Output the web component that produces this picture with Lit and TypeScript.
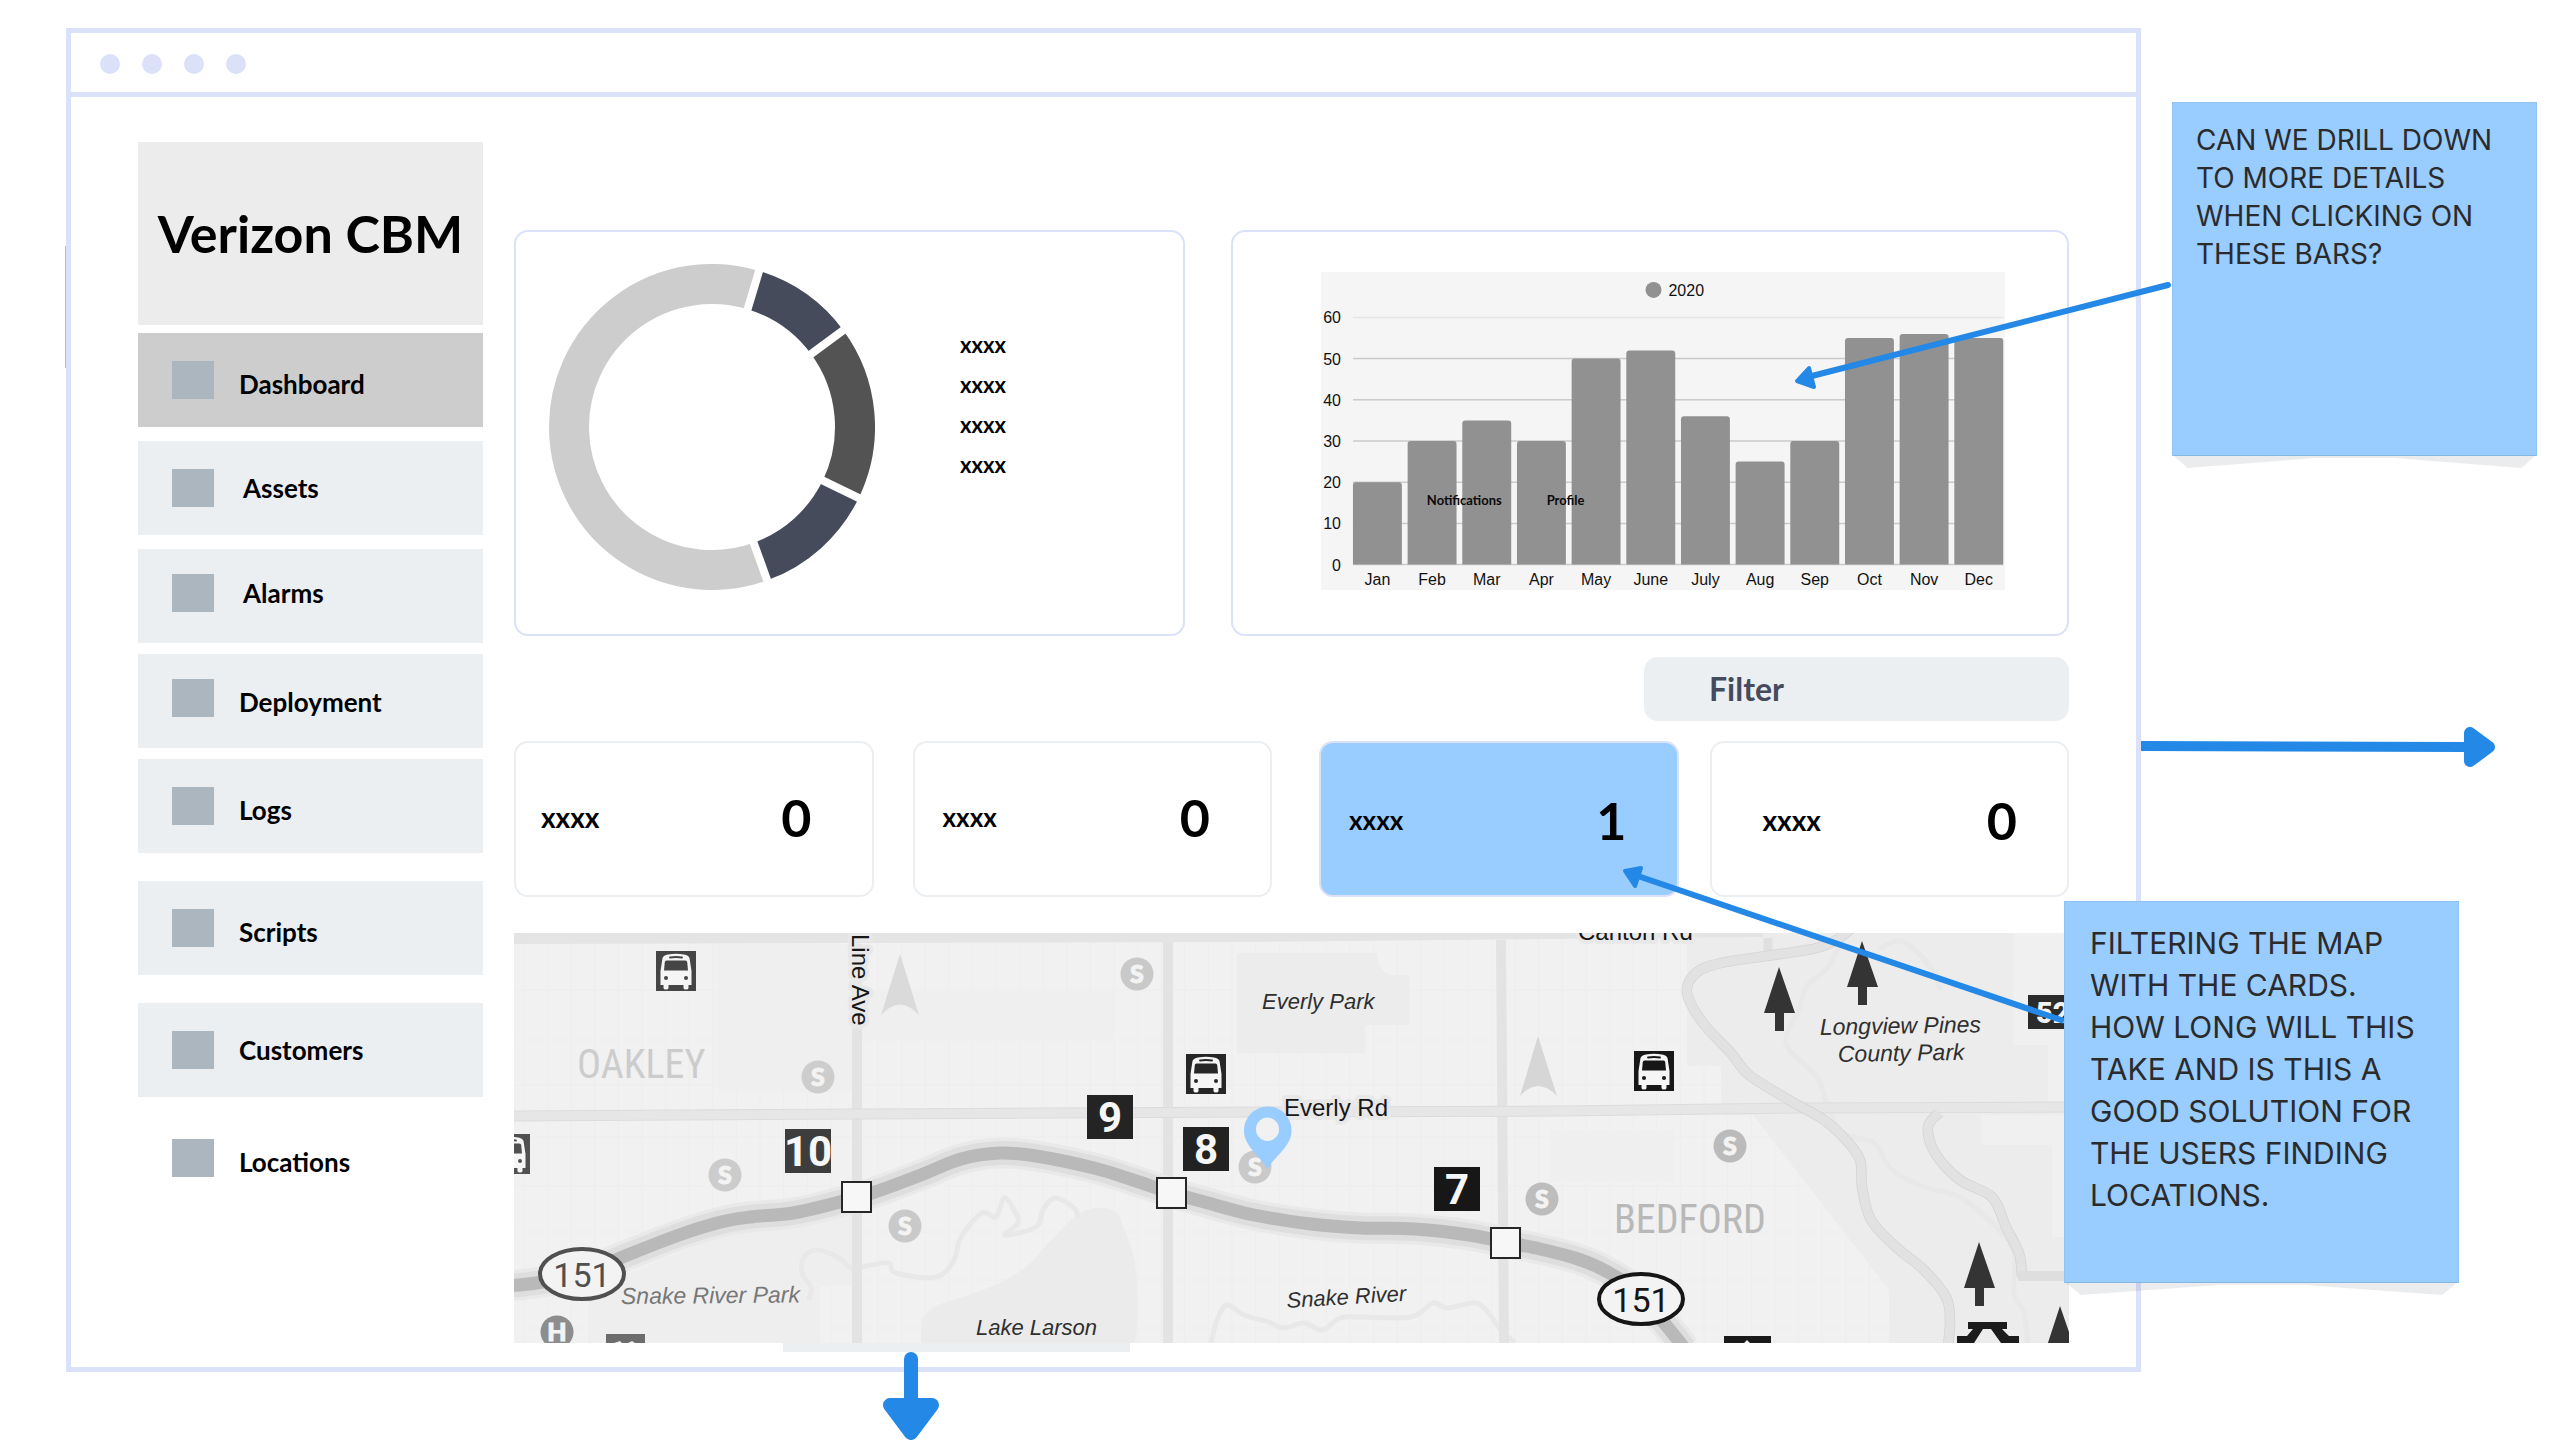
import { LitElement, html, svg, css } from "lit";
import { customElement } from "lit/decorators.js";
import { classMap } from "lit/directives/class-map.js";

type Point = [number, number];

/** Turns a list of points into a smooth path that passes through each of them. */
function curve(points: Point[]): string {
  let d = `M${points[0][0]} ${points[0][1]}`;
  for (let i = 0; i < points.length - 1; i++) {
    const p0 = points[Math.max(i - 1, 0)];
    const p1 = points[i];
    const p2 = points[i + 1];
    const p3 = points[Math.min(i + 2, points.length - 1)];
    const c1 = [p1[0] + (p2[0] - p0[0]) / 6, p1[1] + (p2[1] - p0[1]) / 6];
    const c2 = [p2[0] - (p3[0] - p1[0]) / 6, p2[1] - (p3[1] - p1[1]) / 6];
    d += `C${c1.map((n) => n.toFixed(1)).join(" ")} ${c2.map((n) => n.toFixed(1)).join(" ")} ${p2[0]} ${p2[1]}`;
  }
  return d;
}

interface NavItem {
  label: string;
  space: "small" | "medium" | "near" | "wide";
  active?: boolean;
  plain?: boolean;
  inset?: boolean;
  raised?: boolean;
  low?: boolean;
}

const NAV: NavItem[] = [
  { label: "Dashboard", space: "small", active: true, low: true },
  { label: "Assets", space: "near", inset: true },
  { label: "Alarms", space: "near", inset: true, raised: true },
  { label: "Deployment", space: "medium", raised: true, low: true },
  { label: "Logs", space: "medium", low: true },
  { label: "Scripts", space: "wide", low: true },
  { label: "Customers", space: "wide" },
  { label: "Locations", space: "near", plain: true, low: true },
];

const BARS: [string, number][] = [
  ["Jan", 20], ["Feb", 30], ["Mar", 35], ["Apr", 30], ["May", 50], ["June", 52],
  ["July", 36], ["Aug", 25], ["Sep", 30], ["Oct", 55], ["Nov", 56], ["Dec", 55],
];

const STATS = [
  { value: 0, kind: "first" },
  { value: 0, kind: "second" },
  { value: 1, kind: "active" },
  { value: 0, kind: "last" },
];

@customElement("donut-chart")
export class DonutChart extends LitElement {
  static styles = css`
    :host { display: block; width: 326px; }
    .ring { display: block; width: 100%; }
  `;

  private arc(from: number, to: number, color: string) {
    const at = (deg: number) => {
      const a = (deg * Math.PI) / 180;
      return `${163 + 143 * Math.sin(a)} ${163 - 143 * Math.cos(a)}`;
    };
    const large = to - from > 180 ? 1 : 0;
    return svg`<path d="M${at(from)}A143 143 0 ${large} 1 ${at(to)}" fill="none" stroke=${color} stroke-width="40"/>`;
  }

  render() {
    const cuts = [16.8, 53.6, 115.8, 160.2];
    return html`<svg class="ring" viewBox="0 0 326 326" role="img" aria-label="Share by category">
      ${this.arc(cuts[3], cuts[0] + 360, "#cdcdcd")}
      ${this.arc(cuts[0], cuts[1], "#454b5b")}
      ${this.arc(cuts[1], cuts[2], "#535353")}
      ${this.arc(cuts[2], cuts[3], "#454b5b")}
      ${cuts.map((c) => svg`<path d="M163 50V-6" stroke="#fff" stroke-width="8" transform="rotate(${c} 163 163)"/>`)}
    </svg>`;
  }
}

@customElement("month-chart")
export class MonthChart extends LitElement {
  static styles = css`
    :host { display: block; }
    .plot { display: block; width: 100%; background: #f5f5f5; }
    .axis { font: 16px "Liberation Sans", Arial, sans-serif; fill: #111; }
    .tag { font: 700 13px Lato, sans-serif; fill: #0a0a0a; }
  `;

  render() {
    const base = 293;
    const unit = 4.125;
    return html`<svg class="plot" viewBox="0 0 685 318" role="img" aria-label="Monthly totals for 2020">
      <circle cx="333" cy="18" r="8" fill="#919191"/>
      <text class="axis" x="348" y="24">2020</text>
      ${[0, 10, 20, 30, 40, 50, 60].map((v) => svg`
        <path d="M32 ${base - v * unit}H683" stroke=${v === 60 ? "#e6e6e6" : "#cacaca"} stroke-width="1.5"/>
        <text class="axis" x="20" y=${base + 6 - v * unit} text-anchor="end">${v}</text>`)}
      ${BARS.map(([month, v], i) => {
        const x = 32 + i * 54.75;
        const top = base - v * unit;
        return svg`
          <path d="M${x} ${base}V${top + 3}q0-3 3-3h43q3 0 3 3V${base}z" fill="#919191"/>
          <text class="axis" x=${x + 24.5} y="313" text-anchor="middle">${month}</text>`;
      })}
      <text class="tag" x="106" y="233">Notifications</text>
      <text class="tag" x="226" y="233">Profile</text>
    </svg>`;
  }
}

@customElement("city-map")
export class CityMap extends LitElement {
  static styles = css`
    :host { display: block; }
    .map { display: block; width: 100%; background: #f1f1f1; }
    .place { font: italic 22px "Liberation Sans", Arial, sans-serif; fill: #2f2f2f; }
    .park { font-size: 23px; }
    .faded { fill: #777; }
    .street { font: 24px "Liberation Sans", Arial, sans-serif; fill: #161616; stroke: #e8e8e8; stroke-width: 8px; stroke-linejoin: round; paint-order: stroke; }
    .town { font: 40px "Liberation Sans Narrow", "Roboto Condensed", Roboto, sans-serif; }
    .exit { font: 700 42px Roboto, sans-serif; fill: #f6f6f6; text-anchor: middle; }
    .route { font: 34px Roboto, sans-serif; text-anchor: middle; }
    .letter { font: 900 25px Lato, sans-serif; fill: #f3f3f3; stroke: #f3f3f3; stroke-width: 1px; text-anchor: middle; }
  `;

  private bus(x: number, y: number, color: string) {
    return svg`<g transform="translate(${x} ${y})">
      <rect width="40" height="40" fill=${color}/>
      <path d="M4.5 34V20L6.5 7Q7.5 4 12 3.5Q20 2 28 3.5Q32.5 4 33.5 7L35.5 20V34H32.5V37Q32.5 38.5 30 38.5T27.5 37V34H12.5V37Q12.5 38.5 10 38.5T7.5 37V34z" fill="#f5f5f5"/>
      <path d="M14 6.5Q20 5.5 26 6.5" stroke=${color} stroke-width="1.8" fill="none" stroke-linecap="round"/>
      <path d="M10.5 9.5H29.5Q31 9.5 31.2 11L32 19.5H8L8.8 11Q9 9.5 10.5 9.5z" fill=${color}/>
      <circle cx="10" cy="27" r="2" fill=${color}/><circle cx="30" cy="27" r="2" fill=${color}/>
    </g>`;
  }

  private station(x: number, y: number, color: string, letter = "S") {
    return svg`<circle cx=${x} cy=${y} r="16.5" fill=${color}/>
      <text class="letter" x=${x} y=${y + 9}>${letter}</text>`;
  }

  private exit(x: number, y: number, label: string, color: string) {
    return svg`<rect x=${x} y=${y} width="46" height="44" fill=${color}/>
      <text class="exit" x=${x + 23} y=${y + 37}>${label}</text>`;
  }

  private shield(x: number, y: number, color: string) {
    return svg`<ellipse cx=${x} cy=${y} rx="42" ry="25" fill="#f3f3f3" stroke=${color} stroke-width="4"/>
      <text class="route" x=${x} y=${y + 13} fill=${color}>151</text>`;
  }

  private tree(x: number, y: number) {
    return svg`<path d="M${x} ${y}L${x + 16} ${y + 46}H${x + 5}V${y + 64}H${x - 4}V${y + 46}H${x - 15}z" fill="#343434"/>`;
  }

  private road(points: Point[]) {
    const d = curve(points);
    return svg`<path d=${d} fill="none" stroke="#d3d3d3" stroke-width="10.5"/>
      <path d=${d} fill="none" stroke="#e2e2e2" stroke-width="9"/>`;
  }

  render() {
    const highway = curve([
      [505, 1286], [536, 1283], [582, 1274], [625, 1256], [679, 1235], [721, 1222], [750, 1217], [793, 1213],
      [836, 1203], [875, 1192], [921, 1175], [961, 1159], [1000, 1153], [1036, 1156], [1094, 1168], [1133, 1180],
      [1172, 1193], [1208, 1203], [1254, 1215], [1311, 1224], [1361, 1228], [1415, 1229], [1469, 1235], [1504, 1242],
      [1540, 1249], [1575, 1258], [1600, 1268], [1631, 1287], [1660, 1318], [1685, 1349],
    ]);
    const creek = curve([
      [809, 1300], [811, 1287], [802, 1273], [804, 1257], [818, 1250], [839, 1258], [852, 1268], [871, 1265], [889, 1263],
      [896, 1273], [936, 1277], [954, 1260], [961, 1237], [982, 1213], [996, 1217], [1004, 1198], [1014, 1210],
      [1018, 1223], [1005, 1235], [1036, 1227], [1043, 1210], [1055, 1198], [1074, 1208], [1078, 1218],
    ]);
    const snake = curve([
      [1211, 1343], [1217, 1320], [1227, 1305], [1244, 1315], [1269, 1322], [1283, 1328], [1304, 1323], [1322, 1330],
      [1340, 1318], [1361, 1317], [1411, 1317], [1433, 1303], [1447, 1308], [1476, 1303], [1490, 1315], [1501, 1330], [1515, 1343],
    ]);
    const pines = curve([
      [1842, 940], [1828, 967], [1806, 987], [1799, 1010], [1787, 1033], [1789, 1050], [1817, 1077], [1828, 1107],
      [1842, 1133], [1874, 1143], [1892, 1170], [1924, 1187], [1960, 1197], [1996, 1227], [2014, 1253], [2014, 1293],
      [2024, 1313], [2028, 1343],
    ]);
    const columns = Array.from({ length: 66 }, (_, i) => 524 + i * 23.6);
    const rows = [990, 1040, 1085, 1137, 1186, 1232, 1280, 1328];
    return html`<svg class="map" viewBox="514 933 1555 410" role="img" aria-label="Locations map">
      ${columns.map((x) => svg`<path d="M${x} 933V1343" stroke="#eeeeee" stroke-width="1.5"/>`)}
      ${rows.map((y) => svg`<path d="M514 ${y}H2069" stroke="#eeeeee" stroke-width="1.5"/>`)}
      <path d="M718 944H852V1092H718zM862 990H1115V1040H862zM1550 1130H1674V1182H1550z" fill="#efefef"/>
      <path d="M588 1343V1290L720 1236L852 1212V1286H820V1343z" fill="#eeeeee"/>
      <path d="M1237 953H1377Q1378 975 1395 975H1410V1025H1365V1053H1237z" fill="#ececec"/>
      <path d="M1687 933H2069V1343H1889V1290L1753 1115H1721V1066H1687z" fill="#ececec"/>
      <path d="M2013 933H2069V1102H2048V1045H2013zM1981 1115H2069V1237H2052V1145H1981z" fill="#f0f0f0"/>
      <path d="M921 1343V1323Q924 1310 943 1303Q980 1292 1000 1283Q1030 1268 1040 1252L1061 1230Q1080 1206 1104 1208Q1121 1210 1122 1225Q1136 1250 1137 1287Q1139 1320 1135 1343z" fill="#ebebeb"/>
      <g fill="none" stroke="#e8e8e8" stroke-width="5">
        <path d=${creek}/><path d=${snake}/><path d=${pines}/>
        <path d="M1880 950Q1900 930 1920 955T1935 970M1900 940Q1935 960 1940 990"/>
      </g>
      <path d="M514 933H1763V937L1240 942L514 944z" fill="#e4e4e4"/>
      <path d="M857 944V1343M1168 942V1343M1501 940L1504 1343" stroke="#e3e3e3" stroke-width="10"/>
      <path d="M514 1116L1040 1113L1560 1111L1800 1108L2069 1107" fill="none" stroke="#dcdcdc" stroke-width="11"/>
      <path d="M514 1116L1040 1113L1560 1111L1800 1108L2069 1107" fill="none" stroke="#e6e6e6" stroke-width="9"/>
      <path d="M1768 938V954" stroke="#e0e0e0" stroke-width="9"/>
      ${this.road([[1852, 928], [1836, 940], [1817, 948], [1774, 955], [1721, 963], [1696, 973], [1687, 993], [1703, 1023], [1731, 1053], [1749, 1075], [1789, 1100], [1824, 1120], [1846, 1140], [1860, 1160], [1862, 1187], [1871, 1220], [1896, 1247], [1924, 1270], [1946, 1297], [1950, 1320], [1948, 1346]])}
      ${this.road([[1939, 1113], [1928, 1127], [1935, 1153], [1960, 1180], [1992, 1197], [2006, 1227], [2019, 1253], [2022, 1276]])}
      <path d="M2018 1276H2069" stroke="#dedede" stroke-width="10"/>

      <path d=${highway} fill="none" stroke="#e9e9e9" stroke-width="31"/>
      <path d=${highway} fill="none" stroke="#dedede" stroke-width="24"/>
      <path d=${highway} fill="none" stroke="#b9b9b9" stroke-width="13"/>

      <path d="M900 954L919 1015Q900 994 881 1015z" fill="#dadada"/>
      <path d="M1538 1036L1557 1096Q1538 1076 1520 1096z" fill="#d6d6d6"/>
      ${this.station(818, 1077, "#cdcdcd")}
      ${this.station(725, 1175, "#cccccc")}
      ${this.station(905, 1226, "#c9c9c9")}
      ${this.station(1137, 974, "#c9c9c9")}
      ${this.station(1255, 1167, "#c9c9c9")}
      ${this.station(1542, 1199, "#bdbdbd")}
      ${this.station(1730, 1146, "#bbbbbb")}
      ${this.station(557, 1332, "#8d8d8d", "H")}
      ${this.bus(656, 951, "#454545")}
      ${this.bus(490, 1134, "#505050")}
      ${this.bus(1186, 1054, "#262626")}
      ${this.bus(1634, 1051, "#171717")}
      ${this.exit(785, 1129, "10", "#3d3d3d")}
      ${this.exit(1087, 1095, "9", "#242424")}
      ${this.exit(1183, 1127, "8", "#222222")}
      ${this.exit(1434, 1167, "7", "#171717")}
      <rect x="2028" y="995" width="45" height="34" fill="#2b2b2b"/>
      <text x="2036" y="1023" font-family="Roboto" font-weight="900" font-size="29" fill="#f3f3f3">52</text>
      <g fill="#f7f7f7" stroke="#262626" stroke-width="2">
        <rect x="842" y="1182" width="29" height="30"/>
        <rect x="1157" y="1178" width="29" height="30"/>
        <rect x="1491" y="1228" width="29" height="30"/>
      </g>
      ${this.shield(582, 1274, "#505050")}
      ${this.shield(1641, 1299, "#161616")}
      ${this.tree(1779, 967)}
      ${this.tree(1862, 941)}
      ${this.tree(1979, 1242)}
      ${this.tree(2060, 1306)}
      <path d="M1968 1322H2007V1329H2002L2009 1336H2019V1343H2001L1991 1329H1983L1974 1343H1957V1336H1967L1973 1329H1968z" fill="#1c1c1c"/>
      <path d="M1724 1336H1771V1343H1750L1747 1340L1744 1343H1724z" fill="#1a1a1a"/>
      <path d="M606 1334H645V1343H635L632 1341L628 1343H622L620 1341L614 1343H606z" fill="#6c6c6c"/>

      <text class="town" x="577" y="1078" fill="#cccccc">OAKLEY</text>
      <text class="town" x="1614" y="1233" fill="#b8b8b8">BEDFORD</text>
      <text class="place" x="1262" y="1009">Everly Park</text>
      <text class="place park faded" x="621" y="1304" transform="rotate(-0.5 621 1304)">Snake River Park</text>
      <text class="place" x="976" y="1335">Lake Larson</text>
      <text class="place" x="1287" y="1308" transform="rotate(-3.5 1287 1308)">Snake River</text>
      <text class="place park" x="1820" y="1035" transform="rotate(-1 1820 1035)">Longview Pines</text>
      <text class="place park" x="1838" y="1062" transform="rotate(-1 1838 1062)">County Park</text>
      <text class="street" x="1578" y="940">Canton Rd</text>
      <text class="street" x="1284" y="1116">Everly Rd</text>
      <text class="street" transform="translate(852 934) rotate(90)">Line Ave</text>
      <path d="M1267.5 1106.5A23.7 23.7 0 0 0 1244 1131C1244 1146 1260 1156 1267.5 1169C1275 1156 1291.5 1146 1291.5 1131A23.7 23.7 0 0 0 1267.5 1106.5zM1267.5 1117.5A11.5 11.7 0 1 1 1267.5 1141A11.5 11.7 0 1 1 1267.5 1117.5z" fill="#99ccff"/>
    </svg>`;
  }
}

@customElement("app-root")
export class AppRoot extends LitElement {
  static styles = css`
    :host { display: block; background: #fff; color: #000; font-family: Lato, "Open Sans", sans-serif; }
    * { box-sizing: border-box; }
    .page { position: relative; padding: 28px 419px 68px 66px; overflow: hidden; }
    .frame { border: 5px solid #dce1fa; background: #fff; }
    .titlebar { display: flex; align-items: center; gap: 22px; height: 64px; padding: 2px 29px 0; border-bottom: 5px solid #dce1fa; }
    .dot { width: 20px; height: 20px; border-radius: 50%; background: #dce1fa; }
    .body { display: flex; align-items: flex-start; gap: 31px; padding: 45px 67px 15px; }

    .sidebar { flex: none; width: 345px; }
    .brand { display: flex; align-items: center; justify-content: center; height: 183px; margin: 0; padding-bottom: 2px; background: #ececec; font-size: 52px; font-weight: 700; line-height: 64px; white-space: nowrap; }
    .nav { display: flex; flex-direction: column; }
    .item { display: flex; gap: 25px; height: 94px; padding: 28px 34px; background: #ebeff2; color: #000; font-size: 26px; font-weight: 700; line-height: 38px; text-decoration: none; }
    .item.active { background: #cdcdcd; }
    .item.plain { background: none; }
    .item.inset { gap: 29px; }
    .item.raised { padding-top: 25px; }
    .item.low .label { padding-top: 4px; }
    .small { margin-top: 8px; }
    .medium { margin-top: 11px; }
    .near { margin-top: 14px; }
    .wide { margin-top: 28px; }
    .icon { flex: none; width: 42px; height: 38px; background: #abb6be; }

    .main { flex: 1; min-width: 0; padding-top: 88px; }
    .charts { display: grid; grid-template-columns: 671fr 838fr; gap: 46px; }
    .card { border: 2px solid #dce1fa; border-radius: 14px; background: #fff; }
    .overview { display: flex; gap: 85px; padding: 32px 33px 42px; }
    .legend { margin: 0; padding: 61px 0 0; list-style: none; font-size: 22px; font-weight: 700; line-height: 40px; }
    .monthly { padding: 40px 62px 44px 88px; }
    .filter { display: block; width: 425px; height: 64px; margin: 21px 0 20px auto; padding: 0 65px; border: 0; border-radius: 14px; background: #ebeff2; color: #454b5c; font: 700 32px Lato, sans-serif; text-align: left; }
    .stats { display: grid; grid-template-columns: repeat(4, 1fr); gap: 39px; }
    .stat { display: flex; align-items: center; justify-content: space-between; height: 156px; padding: 0 60px 4px 25px; border: 2px solid #ebeff2; border-radius: 14px; font-size: 26px; font-weight: 700; }
    .stat.second { padding-left: 28px; }
    .stat.active { margin: 0 -8px 0 8px; padding: 2px 50px 0 28px; border-color: #dce1fa; background: #99ccff; }
    .stat.last { padding: 2px 50px 0 51px; }
    .stat.first, .stat.last { font-size: 28px; }
    .stat .value { font-size: 52px; line-height: 64px; }
    .map-block { margin-top: 36px; }
    .scroll { width: 347px; height: 9px; margin-left: 269px; background: #ebeff2; }

    .marks { position: absolute; inset: 0; width: 100%; height: 100%; pointer-events: none; }
    .note { position: absolute; border: 1px solid #8fc3f3; background: #99ccff; color: #2b2b2b; font-family: Inter, "Liberation Sans", sans-serif; }
    .note p { margin: 0; white-space: nowrap; }
    .bars-note { left: 2172px; top: 102px; width: 365px; height: 354px; padding: 18px 23px; font-size: 28px; line-height: 38px; }
    .map-note { left: 2064px; top: 901px; width: 395px; height: 382px; padding: 20px 25px; font-size: 30px; line-height: 42px; }
    .fold { position: absolute; left: 0; top: 100%; width: 100%; height: 13px; background: rgba(60, 64, 75, 0.1); clip-path: polygon(0 0, 4% 100%, 39% 24%, 61% 24%, 96% 100%, 100% 0); }
  `;

  private navItem(item: NavItem) {
    const classes = {
      item: true,
      [item.space]: true,
      active: !!item.active,
      plain: !!item.plain,
      inset: !!item.inset,
      raised: !!item.raised,
      low: !!item.low,
    };
    return html`<a class=${classMap(classes)} href="#${item.label.toLowerCase()}">
      <span class="icon"></span><span class="label">${item.label}</span>
    </a>`;
  }

  render() {
    return html`
      <div class="page">
        <div class="frame">
          <div class="titlebar">
            <span class="dot"></span><span class="dot"></span><span class="dot"></span><span class="dot"></span>
          </div>
          <div class="body">
            <aside class="sidebar">
              <h1 class="brand">Verizon CBM</h1>
              <nav class="nav">${NAV.map((item) => this.navItem(item))}</nav>
            </aside>
            <main class="main">
              <div class="charts">
                <section class="card overview">
                  <donut-chart></donut-chart>
                  <ul class="legend"><li>xxxx</li><li>xxxx</li><li>xxxx</li><li>xxxx</li></ul>
                </section>
                <section class="card monthly"><month-chart></month-chart></section>
              </div>
              <button class="filter" type="button">Filter</button>
              <div class="stats">
                ${STATS.map((s) => html`<section class="stat ${s.kind}"><span>xxxx</span><span class="value">${s.value}</span></section>`)}
              </div>
              <div class="map-block">
                <city-map></city-map>
                <div class="scroll"></div>
              </div>
            </main>
          </div>
        </div>

        <svg class="marks" aria-hidden="true">
          <path d="M65.5 246V368" stroke="#b9bac4" stroke-width="1"/>
          <g stroke="#2388e6" fill="#2388e6" stroke-linejoin="round">
            <path d="M2168 285L1804 378" stroke-width="6" stroke-linecap="round"/>
            <path d="M1797 381L1809 368L1814 387z" stroke-width="4"/>
            <path d="M2064 1021L1632 874" stroke-width="6"/>
            <path d="M1625 871L1641 868L1635 886z" stroke-width="4"/>
            <path d="M2141 746L2466 747" stroke-width="10"/>
            <path d="M2470 733V761L2489 747z" stroke-width="12"/>
            <path d="M911 1359V1405" stroke-width="14" stroke-linecap="round"/>
            <path d="M890 1405H932L911 1433z" stroke-width="14"/>
          </g>
        </svg>
        <aside class="note bars-note">
          <p>CAN WE DRILL DOWN<br />TO MORE DETAILS<br />WHEN CLICKING ON<br />THESE BARS?</p>
          <span class="fold"></span>
        </aside>
        <aside class="note map-note">
          <p>FILTERING THE MAP<br />WITH THE CARDS.<br />HOW LONG WILL THIS<br />TAKE AND IS THIS A<br />GOOD SOLUTION FOR<br />THE USERS FINDING<br />LOCATIONS.</p>
          <span class="fold"></span>
        </aside>
      </div>
    `;
  }
}
